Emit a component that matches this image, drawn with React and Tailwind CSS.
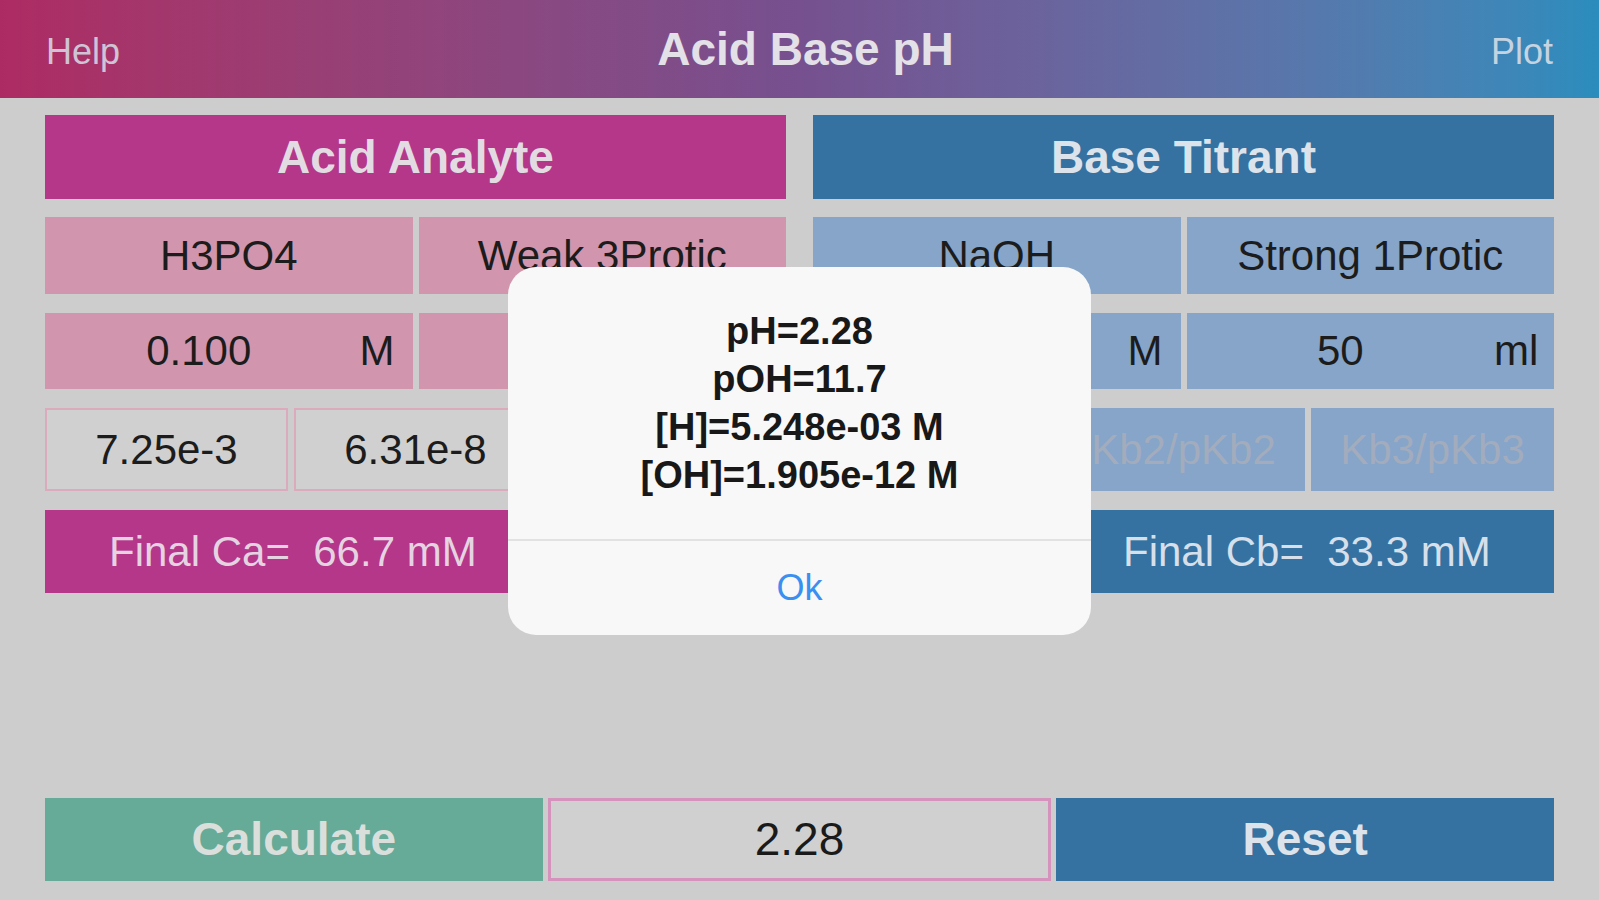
const font = { fontFamily: '"Liberation Sans", Arial, sans-serif' }

function Cell({ className = '', children }) {
  return (
    <div className={`flex items-center justify-center text-[42px] leading-none ${className}`}>
      {children}
    </div>
  )
}

function AmountCell({ value, unit, bg }) {
  return (
    <div className={`flex-1 flex items-center text-[42px] leading-none text-[#1c1c1c] ${bg}`}>
      <span className="flex-1 text-center">{value}</span>
      <span className="w-[60px] pr-[18px] text-right">{unit}</span>
    </div>
  )
}

function AcidColumn() {
  return (
    <div className="flex flex-col">
      <div className="h-[84px] bg-[#b4378a] flex items-center justify-center text-[46px] font-bold text-[#e2dbe2]">
        Acid Analyte
      </div>
      <div className="mt-[18px] h-[77px] flex gap-[6px]">
        <Cell className="flex-1 bg-[#d196ae] text-[#1c1c1c]">H3PO4</Cell>
        <Cell className="flex-1 bg-[#d196ae] text-[#1c1c1c]">Weak 3Protic</Cell>
      </div>
      <div className="mt-[19px] h-[76px] flex gap-[6px]">
        <AmountCell value="0.100" unit="M" bg="bg-[#d196ae]" />
        {/* volume field sits under the alert */}
        <AmountCell value="" unit="" bg="bg-[#d196ae]" />
      </div>
      <div className="mt-[19px] h-[83px] grid grid-cols-3 gap-[6px]">
        <Cell className="bg-[#d0d0d0] border-2 border-[#dcaabd] text-[#1c1c1c]">7.25e-3</Cell>
        <Cell className="bg-[#d0d0d0] border-2 border-[#dcaabd] text-[#1c1c1c]">6.31e-8</Cell>
        <Cell className="bg-[#d0d0d0] border-2 border-[#dcaabd] text-[#1c1c1c]" />
      </div>
      <div className="mt-[19px] h-[83px] bg-[#b4378a] flex items-center pl-[64px] text-[42px] text-[#e6d3e2] whitespace-pre">
        Final Ca=  66.7 mM
      </div>
    </div>
  )
}

function BaseColumn() {
  return (
    <div className="flex flex-col">
      <div className="h-[84px] bg-[#3572a2] flex items-center justify-center text-[46px] font-bold text-[#dde3ea]">
        Base Titrant
      </div>
      <div className="mt-[18px] h-[77px] flex gap-[6px]">
        <Cell className="flex-1 bg-[#86a5c9] text-[#1c1c1c]">NaOH</Cell>
        <Cell className="flex-1 bg-[#86a5c9] text-[#1c1c1c]">Strong 1Protic</Cell>
      </div>
      <div className="mt-[19px] h-[76px] flex gap-[6px]">
        <AmountCell value="" unit="M" bg="bg-[#86a5c9]" />
        <AmountCell value="50" unit="ml" bg="bg-[#86a5c9]" />
      </div>
      <div className="mt-[19px] h-[83px] grid grid-cols-3 gap-[6px]">
        <Cell className="bg-[#86a5c9] text-[#a2acbd]" />
        <Cell className="bg-[#86a5c9] text-[#a2acbd]">Kb2/pKb2</Cell>
        <Cell className="bg-[#86a5c9] text-[#a2acbd]">Kb3/pKb3</Cell>
      </div>
      <div className="mt-[19px] h-[83px] bg-[#3572a2] flex items-center pl-[310px] text-[42px] text-[#d7e0ea] whitespace-pre">
        Final Cb=  33.3 mM
      </div>
    </div>
  )
}

function ResultAlert() {
  return (
    <div className="absolute left-[508px] top-[267px] w-[583px] h-[368px] rounded-[28px] bg-[#f8f8f8] flex flex-col overflow-hidden">
      <div className="pt-[40px] pb-[40px] flex flex-col items-center text-[38px] leading-[48px] font-bold text-[#181818]">
        <div>pH=2.28</div>
        <div>pOH=11.7</div>
        <div>[H]=5.248e-03 M</div>
        <div>[OH]=1.905e-12 M</div>
      </div>
      <div className="h-[2px] bg-[#e2e2e2]" />
      <div className="flex-1 flex items-center justify-center text-[36px] text-[#3b8ff0]">Ok</div>
    </div>
  )
}

export default function App() {
  return (
    <div className="relative w-full h-[900px] bg-[#cdcdcd] flex flex-col overflow-hidden" style={font}>
      <div className="h-[98px] bg-linear-to-r from-[#ad2b63] via-[#76508f] to-[#2a8dbd] flex items-center justify-between px-[46px]">
        <span className="text-[36px] text-[#cfc4d6] mt-[6px]">Help</span>
        <span className="text-[46px] font-bold text-[#e4e0e8]">Acid Base pH</span>
        <span className="text-[36px] text-[#c6d3e0] mt-[6px]">Plot</span>
      </div>

      <div className="flex-1 flex flex-col px-[45px] pt-[17px] pb-[19px]">
        <div className="grid grid-cols-2 gap-[27px]">
          <AcidColumn />
          <BaseColumn />
        </div>

        <div className="mt-auto h-[83px] flex gap-[5px]">
          <button className="flex-1 bg-[#66ab98] text-[46px] font-bold text-[#dadfdc]">Calculate</button>
          <div className="flex-1 bg-[#d0d0d0] border-[3px] border-[#d592bd] flex items-center justify-center text-[46px] text-[#1a1a1a]">
            2.28
          </div>
          <button className="flex-1 bg-[#3572a2] text-[46px] font-bold text-[#dde3ea]">Reset</button>
        </div>
      </div>

      <ResultAlert />
    </div>
  )
}
